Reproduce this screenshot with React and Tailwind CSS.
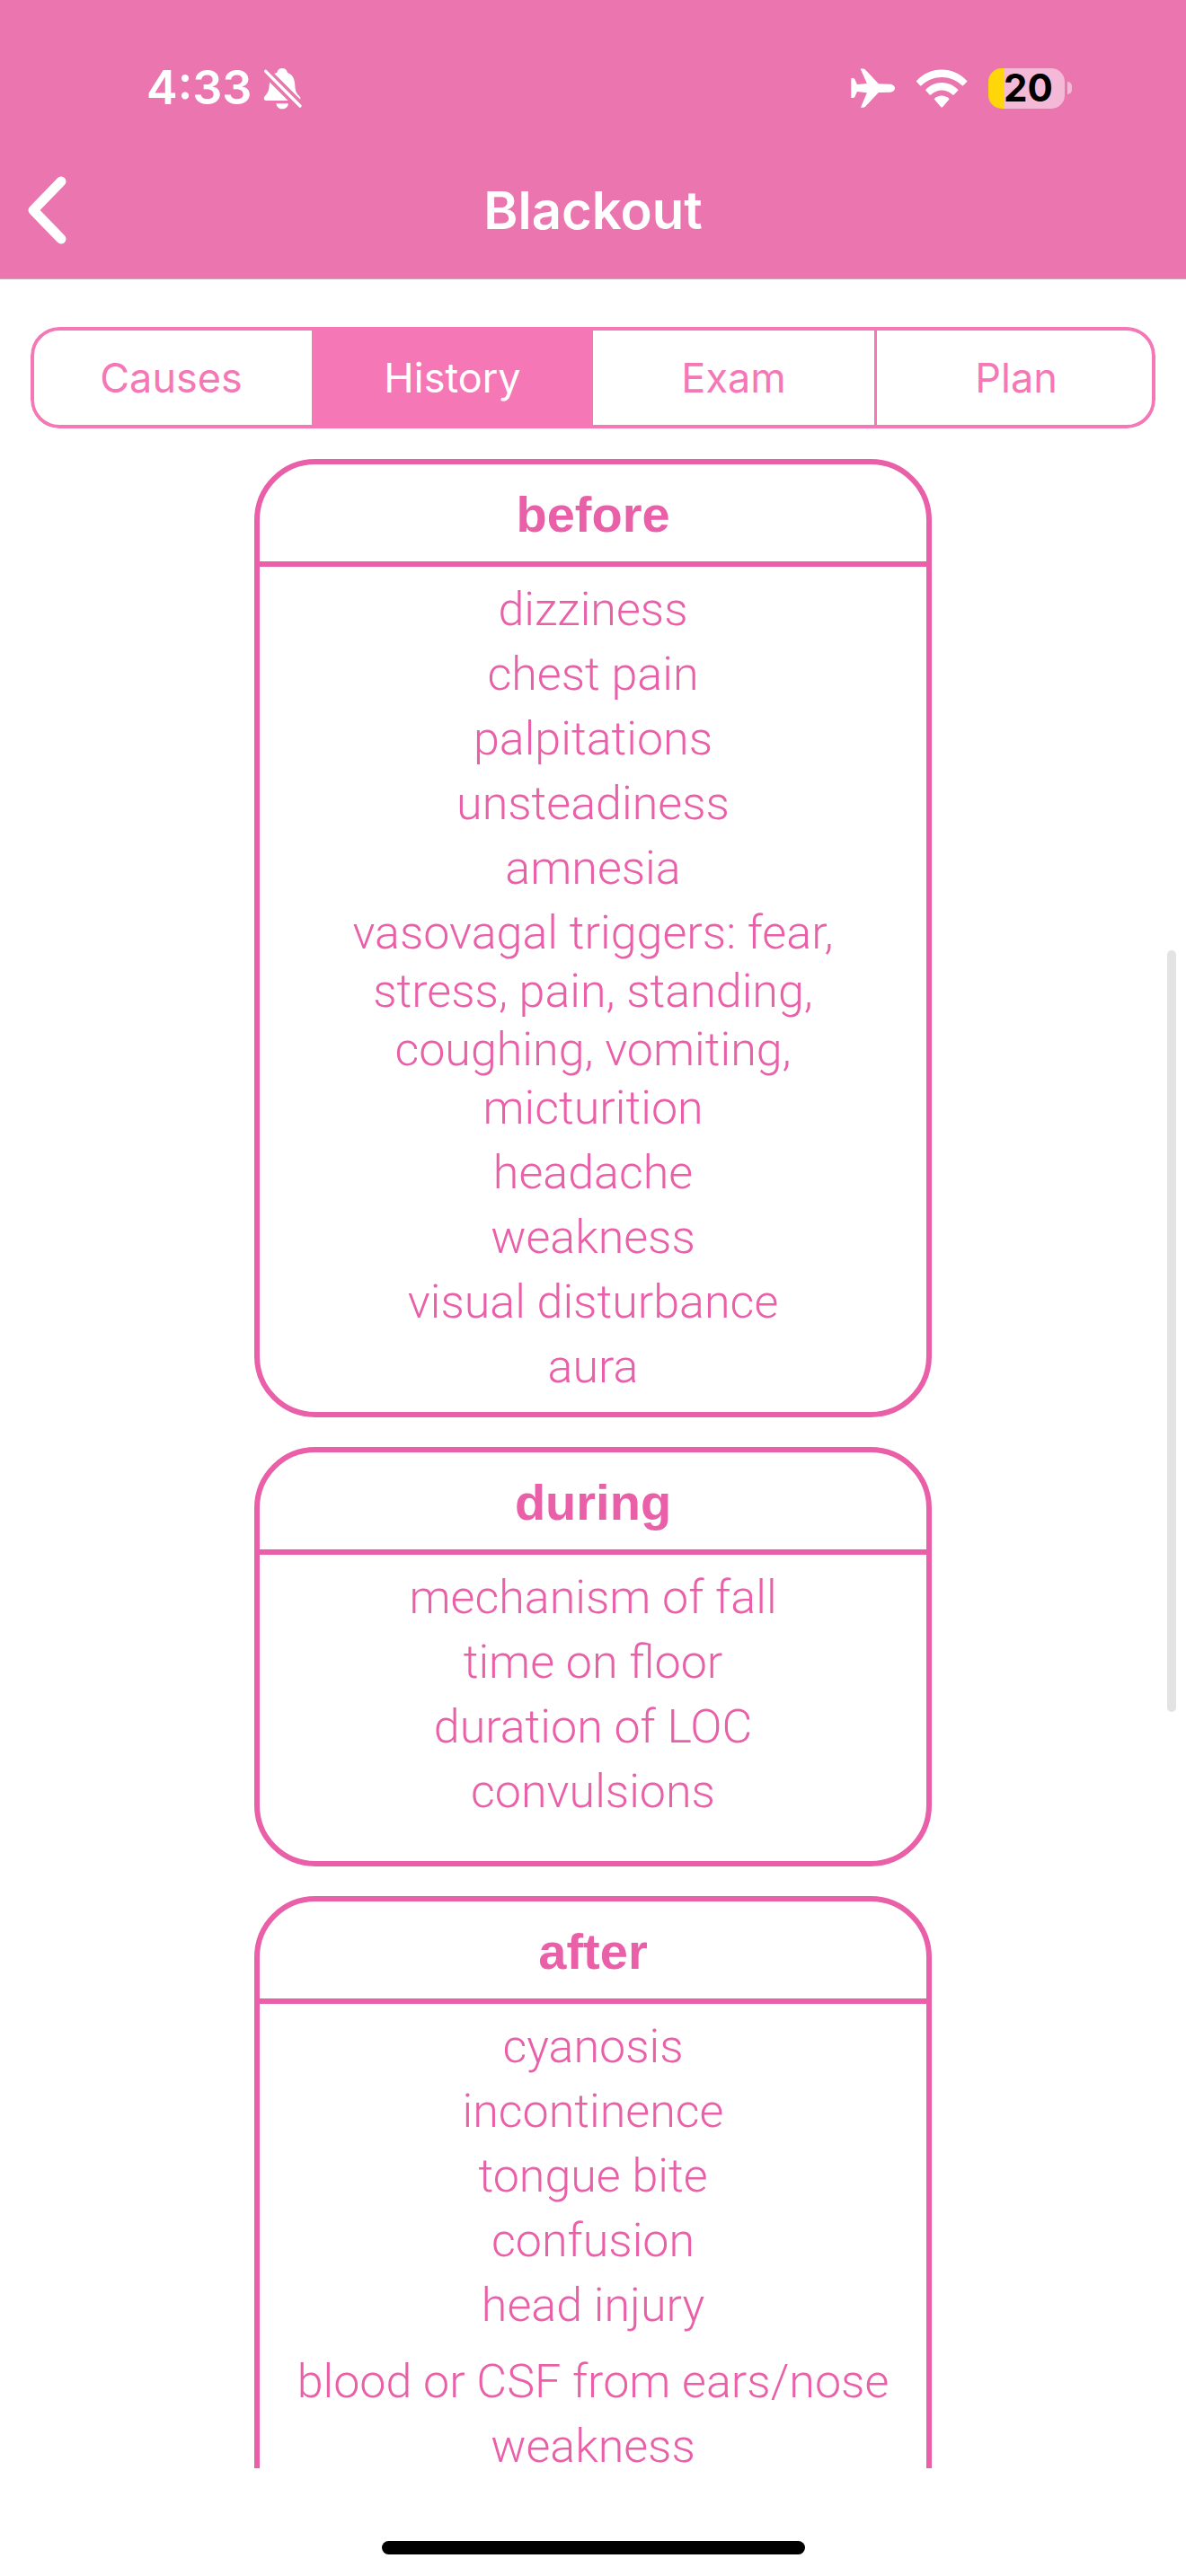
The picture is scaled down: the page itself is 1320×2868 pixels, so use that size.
const tabs = ["Causes", "History", "Exam", "Plan"];

const sections = [
  {
    title: "before",
    items: [
      "dizziness",
      "chest pain",
      "palpitations",
      "unsteadiness",
      "amnesia",
      "vasovagal triggers: fear, stress, pain, standing, coughing, vomiting, micturition",
      "headache",
      "weakness",
      "visual disturbance",
      "aura",
    ],
  },
  {
    title: "during",
    items: ["mechanism of fall", "time on floor", "duration of LOC", "convulsions"],
  },
  {
    title: "after",
    items: [
      "cyanosis",
      "incontinence",
      "tongue bite",
      "confusion",
      "head injury",
      "blood or CSF from ears/nose",
      "weakness",
    ],
  },
];

function BellOffIcon() {
  return (
    <svg viewBox="40 26 128 140" className="h-[47px] w-[43px] fill-white" aria-hidden="true">
      <path d="M77 47L86 43C88 32 96 29 103 29C110 29 118 33 120 43C140 52 144 66 145 85C146 105 150 112 158 120C163 125 165 129 162 132Z" />
      <path d="M61 75L122 136H50C42 136 40 128 45 122C54 112 58 104 59 94Z" />
      <path d="M83 146H123C122 158 113 164 103 164C93 164 84 158 83 146Z" />
      <path d="M48 39L162 154" className="stroke-white" strokeWidth="10" strokeLinecap="round" />
    </svg>
  );
}

function AirplaneIcon() {
  return (
    <svg viewBox="50 48 148 132" className="h-11 w-[49px] fill-white" aria-hidden="true">
      <path d="M182 101C192 101 198 109 198 114.5C198 121 192 128 182 128L143 129L99 176Q95 180 90 180H83L104 130L71 126L63 144Q61 147 57 147H51V81H57Q61 81 63 84L71 102L104 99L82 49H90Q95 49 99 53L143 100Z" />
    </svg>
  );
}

function WifiIcon() {
  return (
    <svg viewBox="268 44 174 128" className="h-[43px] w-[58px] fill-white" aria-hidden="true">
      <path d="M270 84C316 32 394 32 441 84L427 98Q425 100 422 97C385 62 326 62 289 97Q286 100 283 98Z" />
      <path d="M301 113C330 80 381 80 411 113L396 129Q394 131 391 128C370 109 341 109 320 128Q317 131 315 129Z" />
      <path d="M330 143C344 128 367 128 381 143L358 170Q355.500 172 353 170Z" />
    </svg>
  );
}

function Battery() {
  return (
    <div className="flex items-center gap-[3px]">
      <div className="flex h-[45px] w-[85px] items-center justify-center rounded-[15px] bg-linear-to-r from-[#ffd60a] from-20% to-[#f5b9d8] to-20% pl-1 text-[42px] leading-none font-bold text-black">
        20
      </div>
      <div className="h-[14px] w-[5px] rounded-r-full bg-[#f5b9d8]" />
    </div>
  );
}

function Section({ title, items }) {
  return (
    <section className="min-h-[467px] w-4/7 rounded-[68px] border-6 border-[#e95fa8] pb-[18px] text-center text-[#e95fa8] last:pb-24">
      <h2 className="border-b-6 border-[#e95fa8] pt-6 pb-5 font-['Liberation_Sans',Arial,sans-serif] text-[56px] leading-[64px] font-bold">
        {title}
      </h2>
      <ul className="flex flex-col gap-[7px] pt-[15px] font-[Roboto,sans-serif] text-[52px] leading-[65px] font-light">
        {items.map((item) => (
          <li key={item} className={item.startsWith("blood") ? "px-4 pt-[13px]" : "px-20"}>
            {item}
          </li>
        ))}
      </ul>
    </section>
  );
}

export default function App() {
  return (
    <div className="flex h-screen flex-col bg-white font-[Inter,sans-serif]">
      <header className="border-b border-[#c9a9b9] bg-[#eb75af] text-white">
        <div className="flex items-center justify-between pt-[60px] pr-[127px] pb-5 pl-[163px]">
          <div className="flex items-center gap-[13px]">
            <span className="text-[52px] leading-[76px] font-semibold">4:33</span>
            <BellOffIcon />
          </div>
          <div className="flex items-center gap-[23px]">
            <AirplaneIcon />
            <WifiIcon />
            <Battery />
          </div>
        </div>
        <div className="grid grid-cols-[1fr_auto_1fr] items-center pt-10 pb-[38px]">
          <button type="button" aria-label="Back" className="justify-self-start pl-[31px]">
            <svg viewBox="0 0 43 76" className="h-[76px] w-[43px]" fill="none" aria-hidden="true">
              <path d="M37 6L6 38L37 70" stroke="white" strokeWidth="11" strokeLinecap="round" strokeLinejoin="round" />
            </svg>
          </button>
          <h1 className="text-[58px] leading-[76px] font-semibold">Blackout</h1>
        </div>
      </header>

      <nav className="relative mx-[34px] mt-[53px] grid grid-cols-4 overflow-hidden rounded-[32px] after:pointer-events-none after:absolute after:inset-0 after:rounded-[32px] after:border-4 after:border-[#f577b5]">
        {tabs.map((tab) => (
          <button
            key={tab}
            type="button"
            className={
              tab === "History"
                ? "bg-[#f577b5] text-[45px] leading-[113px] text-white"
                : "border-[#f577b5] text-[45px] leading-[113px] text-[#f577b5] last:border-l-3"
            }
          >
            {tab}
          </button>
        ))}
      </nav>

      <main className="relative flex-1 overflow-hidden">
        <div className="flex flex-col items-center gap-[33px] pt-[34px]">
          {sections.map((section) => (
            <Section key={section.title} title={section.title} items={section.items} />
          ))}
        </div>
        <div className="absolute top-[581px] right-[11px] h-[848px] w-[10px] rounded-full bg-[#e3e3e3]" />
      </main>

      <footer className="flex justify-center pt-[81px] pb-6">
        <div className="h-[15px] w-[471px] rounded-full bg-black" />
      </footer>
    </div>
  );
}
